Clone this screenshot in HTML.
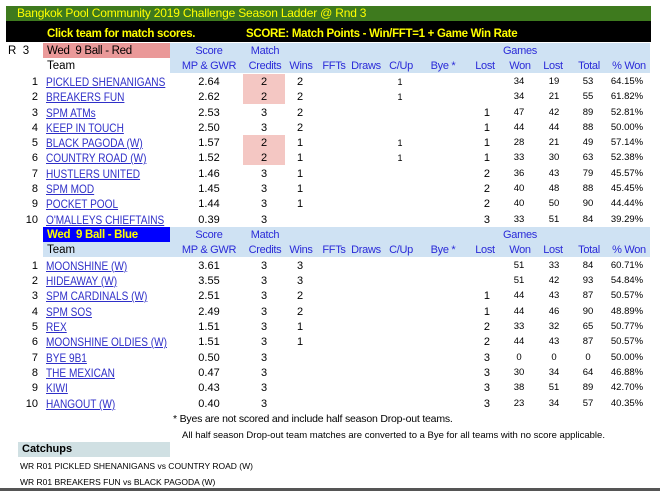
<!DOCTYPE html><html><head><meta charset="utf-8"><style>
body{margin:0;width:660px;height:491px;background:#fff;position:relative;overflow:hidden;font-family:"Liberation Sans",Arial,sans-serif;font-size:11px;color:#000}
.a{position:absolute}
.r{position:absolute;left:0;width:660px;height:15px;line-height:16px}
.r span{position:absolute;top:0;text-align:center}
.n{left:20px;width:18px;text-align:right!important}
.t{left:46px;color:#2f2fc8;text-decoration:underline;text-align:left!important;white-space:nowrap;font-size:12px;transform:scaleX(0.84);transform-origin:0 0}
.s{left:186px;width:46px}.c{left:243px;width:42px}.w{left:288px;width:24px}
.u{left:390px;width:20px;font-size:9px}.l{left:470px;width:20px;text-align:right!important}
.g{font-size:9.5px}
.g1{left:505px;width:28px}.g2{left:540px;width:28px}.g3{left:574px;width:28px}.g4{left:605px;width:44px}
.h{color:#2a2ad8;font-size:11px;letter-spacing:-0.3px}
.pk{background:#f4c7c3}
</style></head><body>
<div class="a" style="left:6px;top:6px;width:645px;height:15px;background:#3e7a1e;color:#ffff00;font-size:12px;line-height:15px;padding-left:11px;box-sizing:border-box;letter-spacing:-0.2px">Bangkok Pool Community 2019 Challenge Season Ladder @ Rnd 3</div>
<div class="a" style="left:6px;top:21px;width:645px;height:21px;background:#000;color:#ffff00;font-weight:bold;font-size:11.5px;line-height:26px;letter-spacing:-0.3px"><span class="a" style="left:41px">Click team for match scores.</span><span class="a" style="left:240px">SCORE: Match Points - Win/FFT=1 + Game Win Rate</span></div>
<div class="a" style="left:170px;top:43px;width:480px;height:30px;background:#cfe2f3"></div>
<div class="a" style="left:43px;top:43px;width:127px;height:15px;background:#ea9999"></div>
<div class="a" style="left:8px;top:43px;line-height:16px;font-size:11.5px">R&nbsp; 3</div>
<div class="a" style="left:47px;top:43px;line-height:16px;font-size:11.5px;letter-spacing:-0.3px">Wed&nbsp; 9 Ball - Red</div>
<div class="a" style="left:47px;top:58px;line-height:16px;font-size:11.5px">Team</div>
<div class="r h" style="top:43px"><span style="left:180px;width:58px">Score</span><span style="left:240px;width:50px">Match</span><span style="left:500px;width:40px">Games</span></div>
<div class="r h" style="top:58px"><span style="left:178px;width:62px">MP &amp; GWR</span><span style="left:240px;width:50px">Credits</span><span style="left:287px;width:28px">Wins</span><span style="left:320px;width:28px">FFTs</span><span style="left:348px;width:36px">Draws</span><span style="left:388px;width:26px">C/Up</span><span style="left:423px;width:40px">Bye *</span><span style="left:470px;width:30px">Lost</span><span style="left:505px;width:30px">Won</span><span style="left:538px;width:30px">Lost</span><span style="left:573px;width:32px">Total</span><span style="left:608px;width:42px">% Won</span></div>
<div class="a pk" style="left:243px;top:74px;width:42px;height:30px"></div>
<div class="a pk" style="left:243px;top:135px;width:42px;height:30px"></div>

<div class="r" style="top:74px"><span class="n">1</span><span class="t">PICKLED SHENANIGANS</span><span class="s">2.64</span><span class="c">2</span><span class="w">2</span><span class="u">1</span><span class="g g1">34</span><span class="g g2">19</span><span class="g g3">53</span><span class="g g4">64.15%</span></div>
<div class="r" style="top:89px"><span class="n">2</span><span class="t">BREAKERS FUN</span><span class="s">2.62</span><span class="c">2</span><span class="w">2</span><span class="u">1</span><span class="g g1">34</span><span class="g g2">21</span><span class="g g3">55</span><span class="g g4">61.82%</span></div>
<div class="r" style="top:105px"><span class="n">3</span><span class="t">SPM ATMs</span><span class="s">2.53</span><span class="c">3</span><span class="w">2</span><span class="l">1</span><span class="g g1">47</span><span class="g g2">42</span><span class="g g3">89</span><span class="g g4">52.81%</span></div>
<div class="r" style="top:120px"><span class="n">4</span><span class="t">KEEP IN TOUCH</span><span class="s">2.50</span><span class="c">3</span><span class="w">2</span><span class="l">1</span><span class="g g1">44</span><span class="g g2">44</span><span class="g g3">88</span><span class="g g4">50.00%</span></div>
<div class="r" style="top:135px"><span class="n">5</span><span class="t">BLACK PAGODA (W)</span><span class="s">1.57</span><span class="c">2</span><span class="w">1</span><span class="u">1</span><span class="l">1</span><span class="g g1">28</span><span class="g g2">21</span><span class="g g3">49</span><span class="g g4">57.14%</span></div>
<div class="r" style="top:150px"><span class="n">6</span><span class="t">COUNTRY ROAD (W)</span><span class="s">1.52</span><span class="c">2</span><span class="w">1</span><span class="u">1</span><span class="l">1</span><span class="g g1">33</span><span class="g g2">30</span><span class="g g3">63</span><span class="g g4">52.38%</span></div>
<div class="r" style="top:166px"><span class="n">7</span><span class="t">HUSTLERS UNITED</span><span class="s">1.46</span><span class="c">3</span><span class="w">1</span><span class="l">2</span><span class="g g1">36</span><span class="g g2">43</span><span class="g g3">79</span><span class="g g4">45.57%</span></div>
<div class="r" style="top:181px"><span class="n">8</span><span class="t">SPM MOD</span><span class="s">1.45</span><span class="c">3</span><span class="w">1</span><span class="l">2</span><span class="g g1">40</span><span class="g g2">48</span><span class="g g3">88</span><span class="g g4">45.45%</span></div>
<div class="r" style="top:196px"><span class="n">9</span><span class="t">POCKET POOL</span><span class="s">1.44</span><span class="c">3</span><span class="w">1</span><span class="l">2</span><span class="g g1">40</span><span class="g g2">50</span><span class="g g3">90</span><span class="g g4">44.44%</span></div>
<div class="r" style="top:212px"><span class="n">10</span><span class="t">O'MALLEYS CHIEFTAINS</span><span class="s">0.39</span><span class="c">3</span><span class="l">3</span><span class="g g1">33</span><span class="g g2">51</span><span class="g g3">84</span><span class="g g4">39.29%</span></div>

<div class="a" style="left:43px;top:227px;width:607px;height:30px;background:#cfe2f3"></div>
<div class="a" style="left:43px;top:227px;width:127px;height:15px;background:#0000ff;color:#ffff00;font-weight:bold;line-height:16px;font-size:11.5px;padding-left:4px;box-sizing:border-box;letter-spacing:-0.3px">Wed&nbsp; 9 Ball - Blue</div>
<div class="a" style="left:47px;top:242px;line-height:16px;font-size:11.5px">Team</div>
<div class="r h" style="top:227px"><span style="left:180px;width:58px">Score</span><span style="left:240px;width:50px">Match</span><span style="left:500px;width:40px">Games</span></div>
<div class="r h" style="top:242px"><span style="left:178px;width:62px">MP &amp; GWR</span><span style="left:240px;width:50px">Credits</span><span style="left:287px;width:28px">Wins</span><span style="left:320px;width:28px">FFTs</span><span style="left:348px;width:36px">Draws</span><span style="left:388px;width:26px">C/Up</span><span style="left:423px;width:40px">Bye *</span><span style="left:470px;width:30px">Lost</span><span style="left:505px;width:30px">Won</span><span style="left:538px;width:30px">Lost</span><span style="left:573px;width:32px">Total</span><span style="left:608px;width:42px">% Won</span></div>

<div class="r" style="top:258px"><span class="n">1</span><span class="t">MOONSHINE (W)</span><span class="s">3.61</span><span class="c">3</span><span class="w">3</span><span class="g g1">51</span><span class="g g2">33</span><span class="g g3">84</span><span class="g g4">60.71%</span></div>
<div class="r" style="top:273px"><span class="n">2</span><span class="t">HIDEAWAY (W)</span><span class="s">3.55</span><span class="c">3</span><span class="w">3</span><span class="g g1">51</span><span class="g g2">42</span><span class="g g3">93</span><span class="g g4">54.84%</span></div>
<div class="r" style="top:288px"><span class="n">3</span><span class="t">SPM CARDINALS (W)</span><span class="s">2.51</span><span class="c">3</span><span class="w">2</span><span class="l">1</span><span class="g g1">44</span><span class="g g2">43</span><span class="g g3">87</span><span class="g g4">50.57%</span></div>
<div class="r" style="top:304px"><span class="n">4</span><span class="t">SPM SOS</span><span class="s">2.49</span><span class="c">3</span><span class="w">2</span><span class="l">1</span><span class="g g1">44</span><span class="g g2">46</span><span class="g g3">90</span><span class="g g4">48.89%</span></div>
<div class="r" style="top:319px"><span class="n">5</span><span class="t">REX</span><span class="s">1.51</span><span class="c">3</span><span class="w">1</span><span class="l">2</span><span class="g g1">33</span><span class="g g2">32</span><span class="g g3">65</span><span class="g g4">50.77%</span></div>
<div class="r" style="top:334px"><span class="n">6</span><span class="t">MOONSHINE OLDIES (W)</span><span class="s">1.51</span><span class="c">3</span><span class="w">1</span><span class="l">2</span><span class="g g1">44</span><span class="g g2">43</span><span class="g g3">87</span><span class="g g4">50.57%</span></div>
<div class="r" style="top:350px"><span class="n">7</span><span class="t">BYE 9B1</span><span class="s">0.50</span><span class="c">3</span><span class="l">3</span><span class="g g1">0</span><span class="g g2">0</span><span class="g g3">0</span><span class="g g4">50.00%</span></div>
<div class="r" style="top:365px"><span class="n">8</span><span class="t">THE MEXICAN</span><span class="s">0.47</span><span class="c">3</span><span class="l">3</span><span class="g g1">30</span><span class="g g2">34</span><span class="g g3">64</span><span class="g g4">46.88%</span></div>
<div class="r" style="top:380px"><span class="n">9</span><span class="t">KIWI</span><span class="s">0.43</span><span class="c">3</span><span class="l">3</span><span class="g g1">38</span><span class="g g2">51</span><span class="g g3">89</span><span class="g g4">42.70%</span></div>
<div class="r" style="top:396px"><span class="n">10</span><span class="t">HANGOUT (W)</span><span class="s">0.40</span><span class="c">3</span><span class="l">3</span><span class="g g1">23</span><span class="g g2">34</span><span class="g g3">57</span><span class="g g4">40.35%</span></div>

<div class="a" style="left:173px;top:412px;font-size:10.5px;line-height:15px;letter-spacing:-0.2px">* Byes are not scored and include half season Drop-out teams.</div>
<div class="a" style="left:182px;top:428px;font-size:9.5px;line-height:15px">All half season Drop-out team matches are converted to a Bye for all teams with no score applicable.</div>
<div class="a" style="left:18px;top:442px;width:152px;height:15px;background:#d0e0e3;font-weight:bold;line-height:15px;padding-left:4px;box-sizing:border-box;font-size:11px">Catchups</div>
<div class="a" style="left:20px;top:460px;font-size:8.5px;line-height:12px">WR R01 PICKLED SHENANIGANS vs COUNTRY ROAD (W)</div>
<div class="a" style="left:20px;top:476px;font-size:8.5px;line-height:12px">WR R01 BREAKERS FUN vs BLACK PAGODA (W)</div>
<div class="a" style="left:0;top:488px;width:660px;height:3px;background:#555"></div>
</body></html>
